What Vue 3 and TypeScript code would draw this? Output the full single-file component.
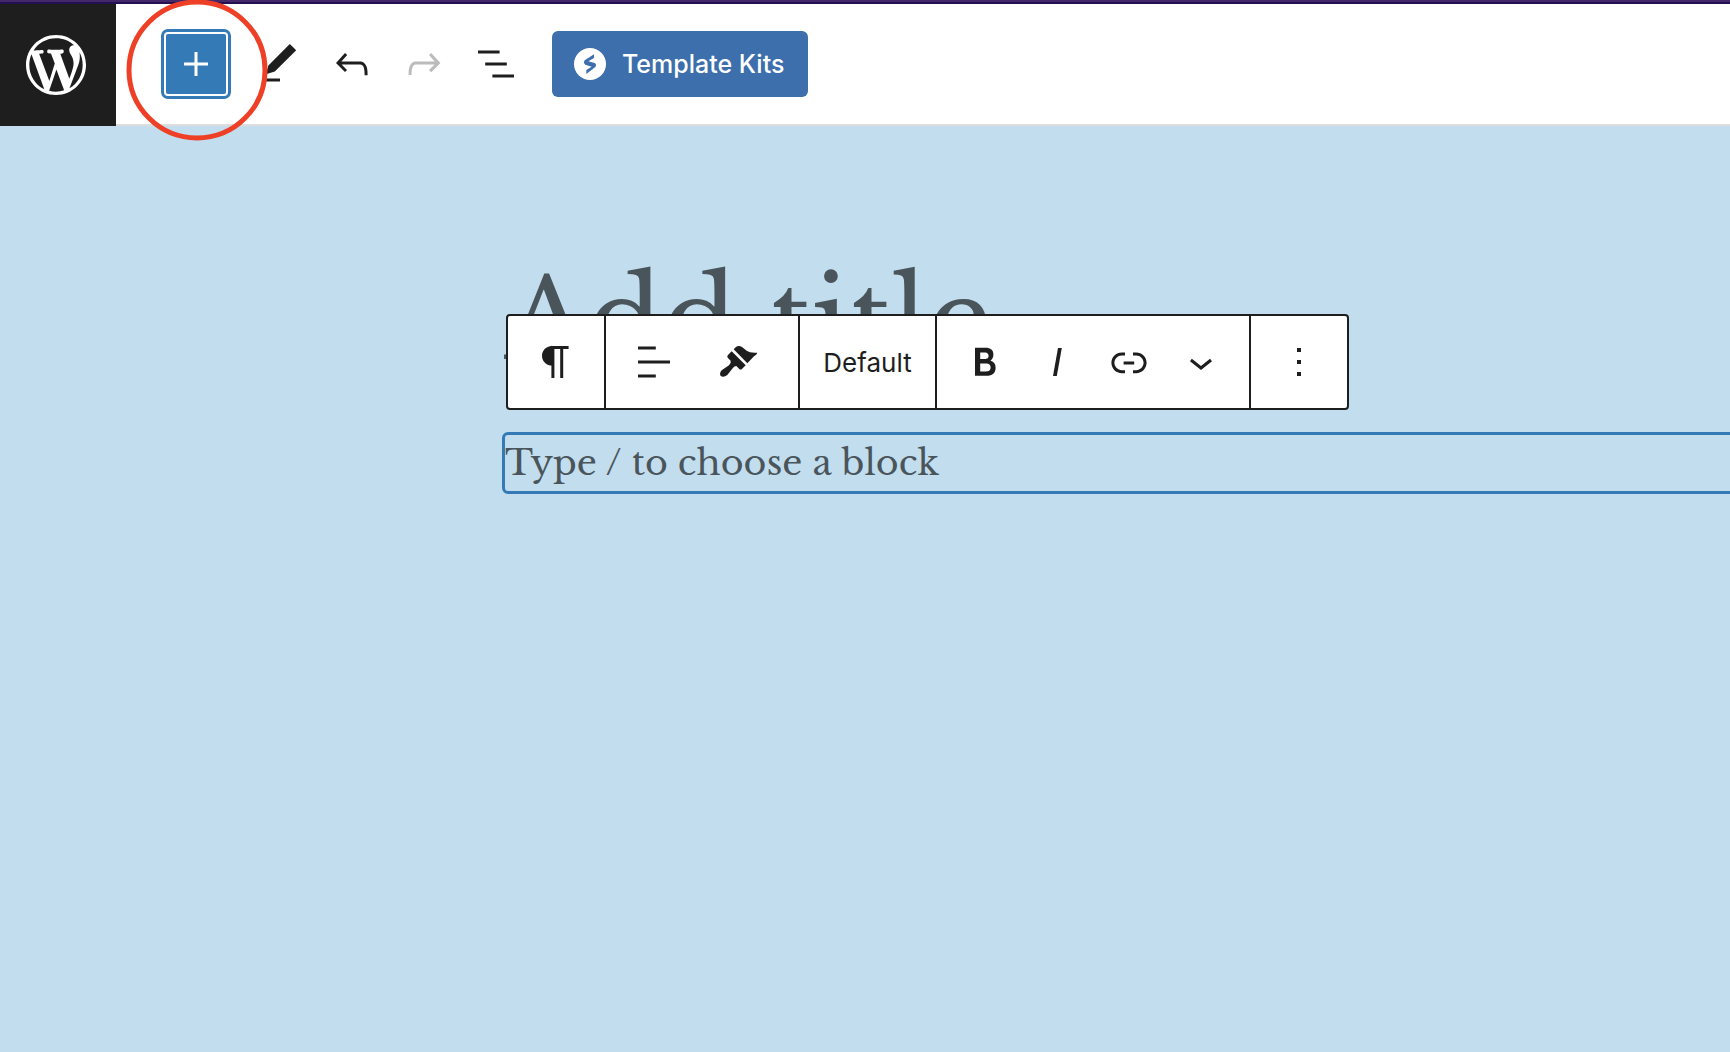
<script setup lang="ts">
import { ref } from 'vue'

interface Tool {
  name: string
  path: string
  disabled?: boolean
}

const title = ref('')
const content = ref('')

const plusIcon = 'M11.25 11.25V6h1.5v5.25H18v1.5h-5.25V18h-1.5v-5.25H6v-1.5z'

const documentTools: Tool[] = [
  { name: 'Tools', path: 'M20.1 5.1L16.9 2 6.2 12.7l-1.3 4.4 4.5-1.3L20.1 5.1zM4 20.8h8v-1.5H4v1.5z' },
  { name: 'Undo', path: 'M18.3 11.7c-.6-.6-1.4-.9-2.3-.9H6.7l2.9-3.3-1.1-1-4.5 5L8.5 16l1-1-2.7-2.7H16c.5 0 .9.2 1.3.5 1 1 1 3.4 1 4.5v.3h1.5v-.2c0-1.5 0-4.3-1.5-5.7z' },
  { name: 'Redo', disabled: true, path: 'M15.6 6.5l-1.1 1 2.9 3.3H8c-.9 0-1.7.3-2.3.9-1.4 1.5-1.4 4.2-1.4 5.6v.2h1.5v-.3c0-1.1 0-3.5 1-4.5.3-.3.7-.5 1.3-.5h9.2L14.5 15l1.1 1.1 4.6-4.6-4.6-5z' },
  { name: 'List View', path: 'M13.8 5.2H3v1.5h10.8V5.2zm-3.6 12v1.5H21v-1.5H10.2zm7.2-6H6.6v1.5h10.8v-1.5z' },
]

const paragraphIcon = 'M18.3 4H9.9v-.1l-.9.2c-2.3.4-4 2.4-4 4.8s1.7 4.4 4 4.8l.7.1V20h1.5V5.5h2.9V20h1.5V5.5h2.7V4z'
const alignIcon = 'M4 19.8h8.9v-1.5H4v1.5zm8.9-15.6H4v1.5h8.9V4.2zm-8.9 7v1.5h16v-1.5H4z'
const optionsIcon = 'M13 19h-2v-2h2v2zm0-6h-2v-2h2v2zm0-6h-2V5h2v2z'

const formatTools: Tool[] = [
  { name: 'Bold', path: 'M14.7 11.3c1-.6 1.5-1.6 1.5-3 0-2.3-1.3-3.4-4-3.4H7v14h5.8c1.4 0 2.5-.3 3.3-1 .8-.7 1.2-1.7 1.2-2.9.1-1.9-.8-3.1-2.6-3.7zm-5.1-4h2.3c.6 0 1.1.1 1.4.4.3.3.5.7.5 1.2s-.2 1-.5 1.2c-.3.3-.8.4-1.4.4H9.6V7.3zm4.6 9c-.4.3-1 .4-1.7.4H9.6v-3.9h2.9c.7 0 1.3.2 1.7.5.4.3.6.8.6 1.5s-.2 1.2-.6 1.5z' },
  { name: 'Italic', path: 'M12.5 5L10 19h1.9l2.5-14z' },
  { name: 'Link', path: 'M15.6 7.2H14v1.5h1.6c2 0 3.7 1.7 3.7 3.7s-1.7 3.7-3.7 3.7H14v1.5h1.6c2.8 0 5.2-2.3 5.2-5.2 0-2.9-2.3-5.2-5.2-5.2zM4.7 12.4c0-2 1.7-3.7 3.7-3.7H10V7.2H8.4c-2.9 0-5.2 2.3-5.2 5.2 0 2.9 2.3 5.2 5.2 5.2H10v-1.5H8.4c-2 0-3.7-1.7-3.7-3.7zm4.6.9h5.3v-1.5H9.3v1.5z' },
  { name: 'More', path: 'M17.5 11.6L12 16l-5.5-4.4.9-1.2L12 14l4.5-3.6 1 1.2z' },
]
</script>

<template>
  <div class="editor">
    <header class="topbar">
      <a class="site-link" href="#" aria-label="View posts">
        <svg class="site-logo" viewBox="-2 -2 24 24" aria-hidden="true">
          <path d="M20 10c0-5.51-4.49-10-10-10C4.48 0 0 4.49 0 10c0 5.52 4.48 10 10 10 5.51 0 10-4.48 10-10zM7.78 15.37L4.37 6.22c.55-.02 1.17-.08 1.17-.08.5-.06.44-1.13-.06-1.11 0 0-1.45.11-2.37.11-.18 0-.37 0-.58-.01C4.12 2.69 6.87 1.11 10 1.11c2.33 0 4.45.87 6.05 2.34-.68-.11-1.65.39-1.65 1.58 0 .74.45 1.36.9 2.1.35.61.55 1.36.55 2.46 0 1.49-1.4 5-1.4 5l-3.03-8.37c.54-.02.82-.17.82-.17.5-.05.44-1.25-.06-1.22 0 0-1.44.12-2.38.12-.87 0-2.33-.12-2.33-.12-.5-.03-.56 1.2-.06 1.22l.92.08 1.26 3.41zM17.41 10c.24-.64.74-1.87.43-4.25.7 1.29 1.05 2.71 1.05 4.25 0 3.29-1.73 6.24-4.4 7.78.97-2.59 1.94-5.2 2.92-7.78zM6.1 18.09C3.12 16.65 1.11 13.53 1.11 10c0-1.3.23-2.48.72-3.59C3.25 10.3 4.67 14.2 6.1 18.09zm4.03-6.63l2.58 6.98c-.86.29-1.76.45-2.71.45-.79 0-1.57-.11-2.29-.33.81-2.38 1.62-4.74 2.42-7.1z" />
        </svg>
      </a>
      <div class="document-tools">
        <div class="inserter-wrap">
          <button class="inserter" type="button" aria-label="Add block">
            <svg class="icon" viewBox="0 0 24 24" aria-hidden="true"><path :d="plusIcon" /></svg>
          </button>
          <svg class="marker" viewBox="0 0 142 142" aria-hidden="true"><circle cx="71" cy="71" r="68" /></svg>
        </div>
        <button
          v-for="tool in documentTools"
          :key="tool.name"
          class="tool"
          type="button"
          :aria-label="tool.name"
          :disabled="tool.disabled"
        >
          <svg class="icon" viewBox="0 0 24 24" aria-hidden="true"><path :d="tool.path" /></svg>
        </button>
        <button class="kits" type="button">
          <svg class="kits-logo" viewBox="0 0 96 96" aria-hidden="true">
            <circle cx="48" cy="48" r="48" fill="#fff" />
            <path d="M60 19V30L43 40L62 45Q69 49 64 57L37 78V66L53 56L34 50Q27 45 32 37Z" fill="#3c6fab" />
          </svg>
          Template Kits
        </button>
      </div>
    </header>

    <main class="canvas">
      <input v-model="title" class="title" type="text" placeholder="Add title" aria-label="Add title" />
      <div class="block">
        <div class="block-toolbar" role="toolbar" aria-label="Block tools">
          <div class="group">
            <button class="cell wide" type="button" aria-label="Paragraph">
              <svg class="icon" viewBox="0 0 24 24" aria-hidden="true"><path :d="paragraphIcon" /></svg>
            </button>
          </div>
          <div class="group padded">
            <button class="cell" type="button" aria-label="Align text">
              <svg class="icon" viewBox="0 0 24 24" aria-hidden="true"><path :d="alignIcon" /></svg>
            </button>
            <button class="cell wide" type="button" aria-label="Styles">
              <svg class="icon" viewBox="42 114 144 144" aria-hidden="true">
                <path d="M101 148L108 141Q116 135 126 141L140 152Q150 160 172 158Q170 164 162 169L142 190Z" />
                <path d="M95 154L137 196L125 208Q121 210 117 206L109 198Q103 198 98 205L82 225Q71 234 62 228Q57 220 65 211L87 196Q94 189 92 182L83 173Q80 169 84 165Z" />
              </svg>
            </button>
          </div>
          <div class="group">
            <button class="cell text" type="button">Default</button>
          </div>
          <div class="group padded">
            <button v-for="tool in formatTools" :key="tool.name" class="cell" type="button" :aria-label="tool.name">
              <svg class="icon" viewBox="0 0 24 24" aria-hidden="true"><path :d="tool.path" /></svg>
            </button>
          </div>
          <div class="group">
            <button class="cell wide" type="button" aria-label="Options">
              <svg class="icon" viewBox="0 0 24 24" aria-hidden="true"><path :d="optionsIcon" /></svg>
            </button>
          </div>
        </div>
        <input
          v-model="content"
          class="paragraph"
          type="text"
          placeholder="Type / to choose a block"
          aria-label="Empty block"
        />
      </div>
    </main>
  </div>
</template>

<style>
body {
  margin: 0;
  background: #c2ddee;
}
</style>

<style scoped>
.editor {
  display: flex;
  flex-direction: column;
  min-height: 100vh;
  overflow: hidden;
  background: #c2ddee;
  color: #1e1e1e;
  font-family: Inter, "Liberation Sans", sans-serif;
  font-size: 26px;
}

.editor,
.editor * {
  box-sizing: border-box;
}

button {
  display: flex;
  align-items: center;
  justify-content: center;
  margin: 0;
  padding: 0;
  border: 0;
  background: none;
  color: inherit;
  font: inherit;
  cursor: pointer;
}

.icon {
  display: block;
  width: 48px;
  height: 48px;
  fill: currentColor;
}

.topbar {
  display: flex;
  height: 126px;
  border-top: 2px solid #43286a;
  background: linear-gradient(#240f50 2px, #fff 2px);
}

.site-link {
  display: flex;
  align-items: center;
  justify-content: center;
  width: 116px;
  margin-top: 2px;
  padding-right: 4px;
  background: #1e1e1e;
}

.site-logo {
  width: 72px;
  height: 72px;
  fill: #fff;
}

.document-tools {
  display: flex;
  flex: 1;
  align-items: center;
  gap: 8px;
  padding: 2px 0 0 48px;
  border-bottom: 2px solid #ddd;
}

.inserter-wrap {
  position: relative;
  margin-right: 12px;
}

.inserter {
  width: 64px;
  height: 64px;
  border-radius: 4px;
  background: #347ab7;
  color: #fff;
  box-shadow: inset 0 0 0 2px #fff, 0 0 0 3px #347ab7;
}

.marker {
  position: absolute;
  top: -33px;
  left: -38px;
  width: 142px;
  height: 142px;
  fill: none;
  stroke: #ee4027;
  stroke-width: 5px;
  pointer-events: none;
  z-index: 1;
}

.tool {
  width: 64px;
  height: 64px;
}

.tool:disabled {
  color: #bbb;
}

.kits {
  gap: 16px;
  height: 66px;
  margin-left: 16px;
  padding: 0 24px 0 22px;
  border-radius: 6px;
  background: #3c6fab;
  color: #fff;
  font-size: 25px;
  font-weight: 500;
}

.kits-logo {
  width: 32px;
  height: 32px;
}

.canvas {
  display: flex;
  flex-direction: column;
  padding: 120px 0 0 502px;
}

.title,
.paragraph {
  display: block;
  padding: 0;
  background: none;
  color: #4a555b;
  font-family: "Libre Baskerville", "Liberation Serif", serif;
  outline: none;
}

.title::placeholder,
.paragraph::placeholder {
  color: #4a555b;
  opacity: 1;
}

.title {
  width: 100%;
  height: 148px;
  padding-left: 2px;
  border: 0;
  font-size: 111px;
  line-height: 148px;
}

.block {
  position: relative;
  margin: 38px -12px 0 0;
}

.paragraph {
  width: 100%;
  height: 62px;
  padding-bottom: 2px;
  border: 3px solid #347ab7;
  border-radius: 6px;
  font-size: 35px;
  line-height: 54px;
}

.block-toolbar {
  position: absolute;
  bottom: calc(100% + 22px);
  left: 4px;
  display: flex;
  height: 96px;
  border: 2px solid #1e1e1e;
  border-radius: 4px;
  background: #fff;
}

.group {
  display: flex;
}

.group + .group {
  border-left: 2px solid #1e1e1e;
}

.padded {
  padding: 0 12px;
}

.cell {
  width: 72px;
}

.wide {
  width: 96px;
}

.text {
  width: auto;
  min-width: 135px;
  padding: 0 22px;
}
</style>
